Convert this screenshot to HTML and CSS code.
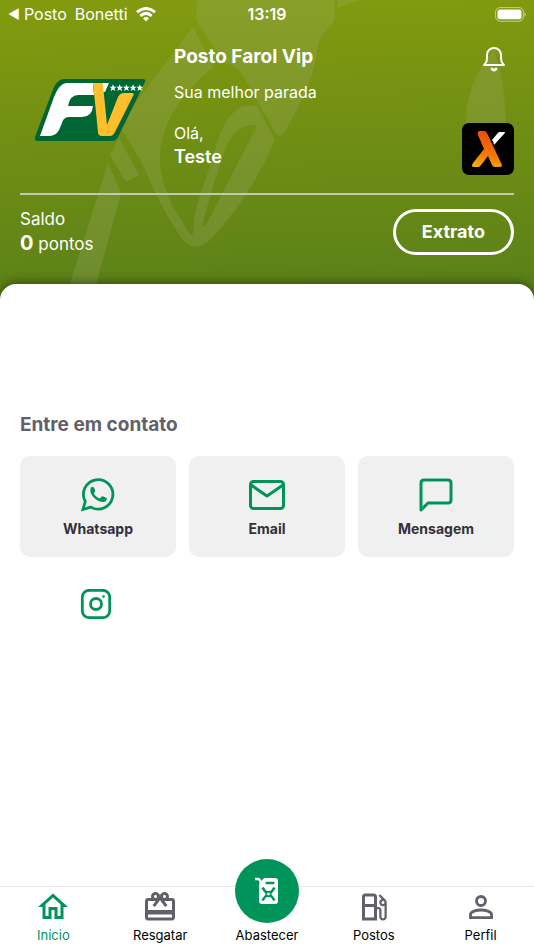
FILE: index.html
```html
<!DOCTYPE html>
<html lang="pt-BR">
<head>
<meta charset="utf-8">
<meta name="viewport" content="width=device-width, initial-scale=1">
<title>Posto Farol Vip</title>
<link rel="stylesheet" href="styles.css">
</head>
<body>
<div class="app">
  <header class="hero">
    <svg class="hero-art" width="534" height="300" viewBox="0 0 534 300" aria-hidden="true">
      <path d="M197 0H334Q337 18 331 26Q320 34 318 46Q314 76 303 98L284 134Q280 138 276 134L245 79Q237 64 224 63L196 20Z"/>
      <path d="M193 27L213 67Q157 114 160 164Q162 184 172 205L189 233Q190 237 194 232C190 220 205 182 213 157Q224 112 244 106H257L275 140Q252 195 211 239Q196 254 183 240C166 217 153 188 142 163L119 125ZM256 128Q257 125 252 125Q238 125 228 143Q219 163 202 226Q205 226 207 223Z"/>
      <path d="M119 138L139 175L126 182L110 155ZM108 163L121 193L92 300H65ZM337 0H360L338 8Z"/>
      <path d="M494 50Q464 84 466 130H506Q506 85 494 50Z"/>
    </svg>
    <div class="status-bar">
      <div class="carrier"><span class="back">◀</span><span>Posto</span><span>Bonetti</span>
        <svg width="20" height="15" viewBox="0 0 20 15" fill="none" stroke="#fff" stroke-width="3" aria-hidden="true"><path d="M1 5.200Q10-2.200 19 5.200M4.300 8.800Q10 4 15.700 8.800"/><path d="M7 11.300Q10 8.900 13 11.300L10 14.500Z" fill="#fff" stroke="none"/></svg>
      </div>
      <time>13:19</time>
      <svg class="battery" width="32" height="15" viewBox="0 0 32 15" aria-hidden="true"><rect x="1.600" y=".6" width="27.800" height="13.600" rx="4.500" fill="none" stroke="#fff" stroke-opacity=".55"/><rect x="3.500" y="2.500" width="24" height="9.800" rx="2.500" fill="#fff"/><path d="M30.500 5Q33 7.500 30.500 10Z" fill="#fff" opacity=".6"/></svg>
    </div>
    <div class="station">
      <svg class="logo" width="112" height="64" viewBox="0 0 112 64" role="img" aria-label="FV">
        <path d="M29 1H109Q112 1 111 4L84 59Q82 63 78 63H4Q0 63 1 59L18 14Q22 2 29 1Z" fill="#006633"/>
        <path d="M32 5H59L60 17H44Q36 17 34 28H59Q58 39 48 39H34Q29 40 28 45L25 52Q22 58 14 58H6L20 19Q25 6 32 5ZM68 5H75L71 14H69Z" fill="#fff"/>
        <path d="M59 5H67Q69 5 69 7L73 47L84 19Q86 15 90 15H98Q101 15 99 18L81 54Q79 58 76 58H68Q64 58 64 54Z" fill="#ffbf2c"/>
        <g fill="#fff"><path id="star" d="M79 6.200L80 8.700H82.500L80.500 10.300L81.300 13L79 11.400L76.700 13L77.500 10.300L75.500 8.700H78Z"/><use href="#star" x="6.700"/><use href="#star" x="13.400"/><use href="#star" x="20.100"/><use href="#star" x="26.800"/></g>
      </svg>
      <div class="welcome">
        <h1>Posto Farol Vip</h1>
        <p class="slogan">Sua melhor parada</p>
        <p class="hello">Olá,</p>
        <strong>Teste</strong>
      </div>
      <div class="tools">
        <button class="icon-button bell" aria-label="Notificações"><svg width="24" height="26" viewBox="0 0 24 26" fill="none" stroke="#fff" stroke-width="2" stroke-linecap="round" stroke-linejoin="round"><path d="M2 18H22L20 15.500Q19 14 19 8A7 7 0 0 0 5 8Q5 14 4 15.500Z"/><path d="M10 22Q12 24 14 22" stroke-width="2.600"/></svg></button>
        <button class="icon-button" aria-label="X"><svg width="52" height="52" viewBox="0 0 52 52"><defs><linearGradient id="flame" x1="20" y1="8" x2="12" y2="45" gradientUnits="userSpaceOnUse"><stop stop-color="#ee4d0b"/><stop offset=".6" stop-color="#f27a08"/><stop offset="1" stop-color="#fbb900"/></linearGradient></defs><rect width="52" height="52" rx="7" fill="#000"/><path d="M17 8H22Q24 8 25 10L40 42Q40 44 38 44H33Q31 44 30 42L26 33L19 42Q18 44 16 44H11Q9 43 11 40L22 26L16 12Q15 9 17 8Z" fill="url(#flame)"/><path d="M43 9H38Q36 9 35 11L30 17Q32 19 32 22L42 11Q43 10 43 9Z" fill="#fff"/></svg></button>
      </div>
    </div>
    <div class="balance">
      <div><p>Saldo</p><p><strong>0</strong> pontos</p></div>
      <button class="statement">Extrato</button>
    </div>
  </header>
  <main>
    <h2>Entre em contato</h2>
    <div class="contacts">
      <a class="card" href="#whatsapp"><svg width="38" height="38" viewBox="0 0 38 38" fill="none" stroke="#00935a" stroke-width="2.800"><path d="M4 33.500L6.300 25.500A14.700 14.700 0 1 1 11.800 31.100Z"/><path d="M12 11.500Q14 9.500 15.500 12.500Q17 15.500 15.300 16.500Q14 17.500 17 20.200Q20 23 21.500 22Q22.500 19.500 24.500 20.500L28 22.200Q27.500 26.500 23.500 26C17 25.500 9 17.500 12 11.500Z" fill="#00935a" stroke="none"/></svg>Whatsapp</a>
      <a class="card" href="#email"><svg width="38" height="38" viewBox="0 0 38 38" fill="none" stroke="#00935a" stroke-width="3" stroke-linejoin="round"><rect x="2.500" y="5.500" width="33" height="27" rx="3"/><path d="M3 9L19 20L35 9"/></svg>Email</a>
      <a class="card" href="#mensagem"><svg width="38" height="38" viewBox="0 0 38 38" fill="none" stroke="#00935a" stroke-width="3" stroke-linejoin="round"><path d="M4 34V7Q4 4 7 4H31Q34 4 34 7V24Q34 27 31 27H11Z"/></svg>Mensagem</a>
      <a class="instagram" href="#instagram" aria-label="Instagram"><svg width="36" height="32" viewBox="0 0 36 32" fill="none" stroke="#00935a" stroke-width="2.800"><rect x="2.300" y="1.300" width="27.400" height="27.400" rx="7"/><circle cx="16" cy="15" r="5.500"/><circle cx="23.500" cy="7.500" r="1.300" fill="#00935a" stroke="none"/></svg></a>
    </div>
  </main>
  <nav class="tabs" aria-label="Principal">
    <a class="active" href="#inicio"><svg width="36" height="36" viewBox="0 0 24 24" fill="currentColor"><path d="M12 5.690l5 4.500V18h-2v-6H9v6H7v-7.810l5-4.500M12 3L2 12h3v8h6v-6h2v6h6v-8h3L12 3"/></svg>Início</a>
    <a href="#resgatar"><svg class="gray" width="36" height="36" viewBox="0 0 24 24" fill="currentColor"><path d="M20 6h-2.180c.11-.31.18-.65.18-1 0-1.660-1.340-3-3-3-1.050 0-1.960.54-2.500 1.350l-.5.670-.5-.68C10.960 2.540 10.050 2 9 2 7.340 2 6 3.340 6 5c0 .35.07.69.18 1H4c-1.110 0-1.990.89-1.990 2L2 19c0 1.110.89 2 2 2h16c1.110 0 2-.89 2-2V8c0-1.110-.89-2-2-2zm-5-2c.55 0 1 .45 1 1s-.45 1-1 1-1-.45-1-1 .45-1 1-1zM9 4c.55 0 1 .45 1 1s-.45 1-1 1-1-.45-1-1 .45-1 1-1zm11 15H4v-2h16v2zm0-5H4V8h5.080L7 10.830 8.620 12 11 8.760l1-1.360 1 1.360L15.380 12 17 10.830 14.920 8H20v6z"/></svg>Resgatar</a>
    <a class="fuel" href="#abastecer"><span class="fuel-disc"><svg width="26" height="28" viewBox="0 0 26 28" fill="none"><path d="M1 2H4Q6 2 7 6" stroke="#fff" stroke-width="2.400"/><path d="M10 1H21Q24 1 24 4V24Q24 27 21 27H8Q5 27 5 24V7Z" fill="#fff"/><rect x="11.500" y="4.800" width="9" height="2.400" rx="1" fill="#00935a"/><path d="M8.500 10.500Q10 14 14.500 17Q19 20 20.500 23.500M20.500 10.500Q19 14 14.500 17Q10 20 8.500 23.500" stroke="#00935a" stroke-width="2.600"/><rect x="11.500" y="14" width="6" height="6" rx="1" fill="#00935a"/><rect x="13.300" y="15.800" width="2.400" height="2.400" fill="#fff"/></svg></span>Abastecer</a>
    <a href="#postos"><svg class="gray" width="36" height="36" viewBox="0 0 24 24" fill="currentColor"><path d="M19.770 7.230l.01-.01-3.720-3.720L15 4.560l2.110 2.110c-.94.36-1.610 1.260-1.610 2.330 0 1.380 1.120 2.500 2.500 2.500.36 0 .69-.08 1-.21v7.210c0 .55-.45 1-1 1s-1-.45-1-1V14c0-1.100-.9-2-2-2h-1V5c0-1.100-.9-2-2-2H6c-1.100 0-2 .9-2 2v16h10v-7.500h1.500v5c0 1.380 1.120 2.500 2.500 2.500s2.500-1.120 2.500-2.500V9c0-.69-.28-1.320-.73-1.770zM12 13.500V19H6v-7h6v1.500zm0-3.500H6V5h6v5zm6 0c-.55 0-1-.45-1-1s.45-1 1-1 1 .45 1 1-.45 1-1 1z"/></svg>Postos</a>
    <a href="#perfil"><svg class="gray" width="36" height="36" viewBox="0 0 24 24" fill="none" stroke="currentColor" stroke-width="1.900"><circle cx="12" cy="8" r="3"/><path d="M5 19.050V17C5 15 9 14 12 14S19 15 19 17V19.050Z"/></svg>Perfil</a>
  </nav>
</div>
</body>
</html>
```
FILE: styles.css
```css
* { box-sizing: border-box; }
body { margin: 0; font-family: Inter, sans-serif; background: #fff; }
h1, h2, p { margin: 0; }
button { font: inherit; color: inherit; cursor: pointer; }
a { color: inherit; text-decoration: none; }
svg { display: block; flex: none; }
.app { min-height: 100vh; display: flex; flex-direction: column; }
.hero {
  position: relative;
  padding: 0 20px 46px;
  color: #fff;
  background: linear-gradient(178deg, #849b0f, #587f19);
  overflow: hidden;
}
.hero-art { position: absolute; left: 0; top: 0; fill: #a0ad70; opacity: .25; }
.status-bar {
  position: relative;
  display: grid;
  grid-template-columns: 1fr auto 1fr;
  align-items: center;
  height: 28px;
  margin: 0 -12px;
  font-size: 16px;
}
.carrier { display: flex; align-items: center; gap: 8px; }
.carrier .back { font-size: 13px; margin-right: -4px; }
.status-bar time { font-weight: 600; }
.battery { justify-self: end; }
.station { position: relative; display: flex; height: 167px; border-bottom: 2px solid #c1c9b1; }
.logo { margin: 50px 28px 0 14px; }
.welcome { flex: 1; padding-top: 17px; font-size: 16px; line-height: 24px; }
.welcome h1 { font-size: 19px; line-height: 24px; font-weight: 700; }
.welcome .slogan { margin-top: 11px; }
.welcome .hello { margin-top: 17px; }
.welcome strong { font-size: 18px; font-weight: 600; }
.tools { display: flex; flex-direction: column; justify-content: space-between; align-items: center; padding: 19px 0 18px; }
.icon-button { padding: 0; border: 0; background: none; }
.bell { margin-left: 12px; }
.balance { position: relative; display: flex; justify-content: space-between; align-items: center; padding-top: 12px; font-size: 17px; line-height: 24px; }
.balance strong { font-size: 20px; font-weight: 700; }
.statement { height: 46px; padding: 0 26px; border: 3px solid #fff; border-radius: 24px; background: none; font-size: 18px; font-weight: 700; }
main { position: relative; flex: 1; margin-top: -18px; padding: 128px 20px 24px; border-radius: 16px 16px 0 0; background: #fff; box-shadow: 0 0 12px rgb(0 0 0 / 55%); clip-path: inset(-16px 0 0); }
h2 { font-size: 19px; line-height: 26px; font-weight: 700; color: #62606a; }
.contacts { display: grid; grid-template-columns: repeat(3, 1fr); gap: 32px 13px; margin-top: 18px; }
.card { display: flex; flex-direction: column; align-items: center; gap: 5px; height: 101px; padding-top: 20px; border-radius: 10px; background: #f0f0f0; color: #33313b; font-size: 14px; line-height: 20px; font-weight: 700; }
.instagram { justify-self: center; }
.tabs { position: relative; display: grid; grid-template-columns: repeat(5, 1fr); grid-template-rows: 63px; border-top: 1px solid #e9e9e9; background: #fff; font-size: 13px; line-height: 18px; color: #000; }
.tabs a { display: flex; flex-direction: column; align-items: center; justify-content: flex-end; gap: 1px; padding-bottom: 6px; }
.tabs .fuel { gap: 3px; }
.tabs .active { color: #00935a; }
.gray { color: #62606a; }
.fuel-disc { display: grid; place-items: center; flex: none; width: 64px; height: 64px; border-radius: 50%; background: #00935a; }
```
